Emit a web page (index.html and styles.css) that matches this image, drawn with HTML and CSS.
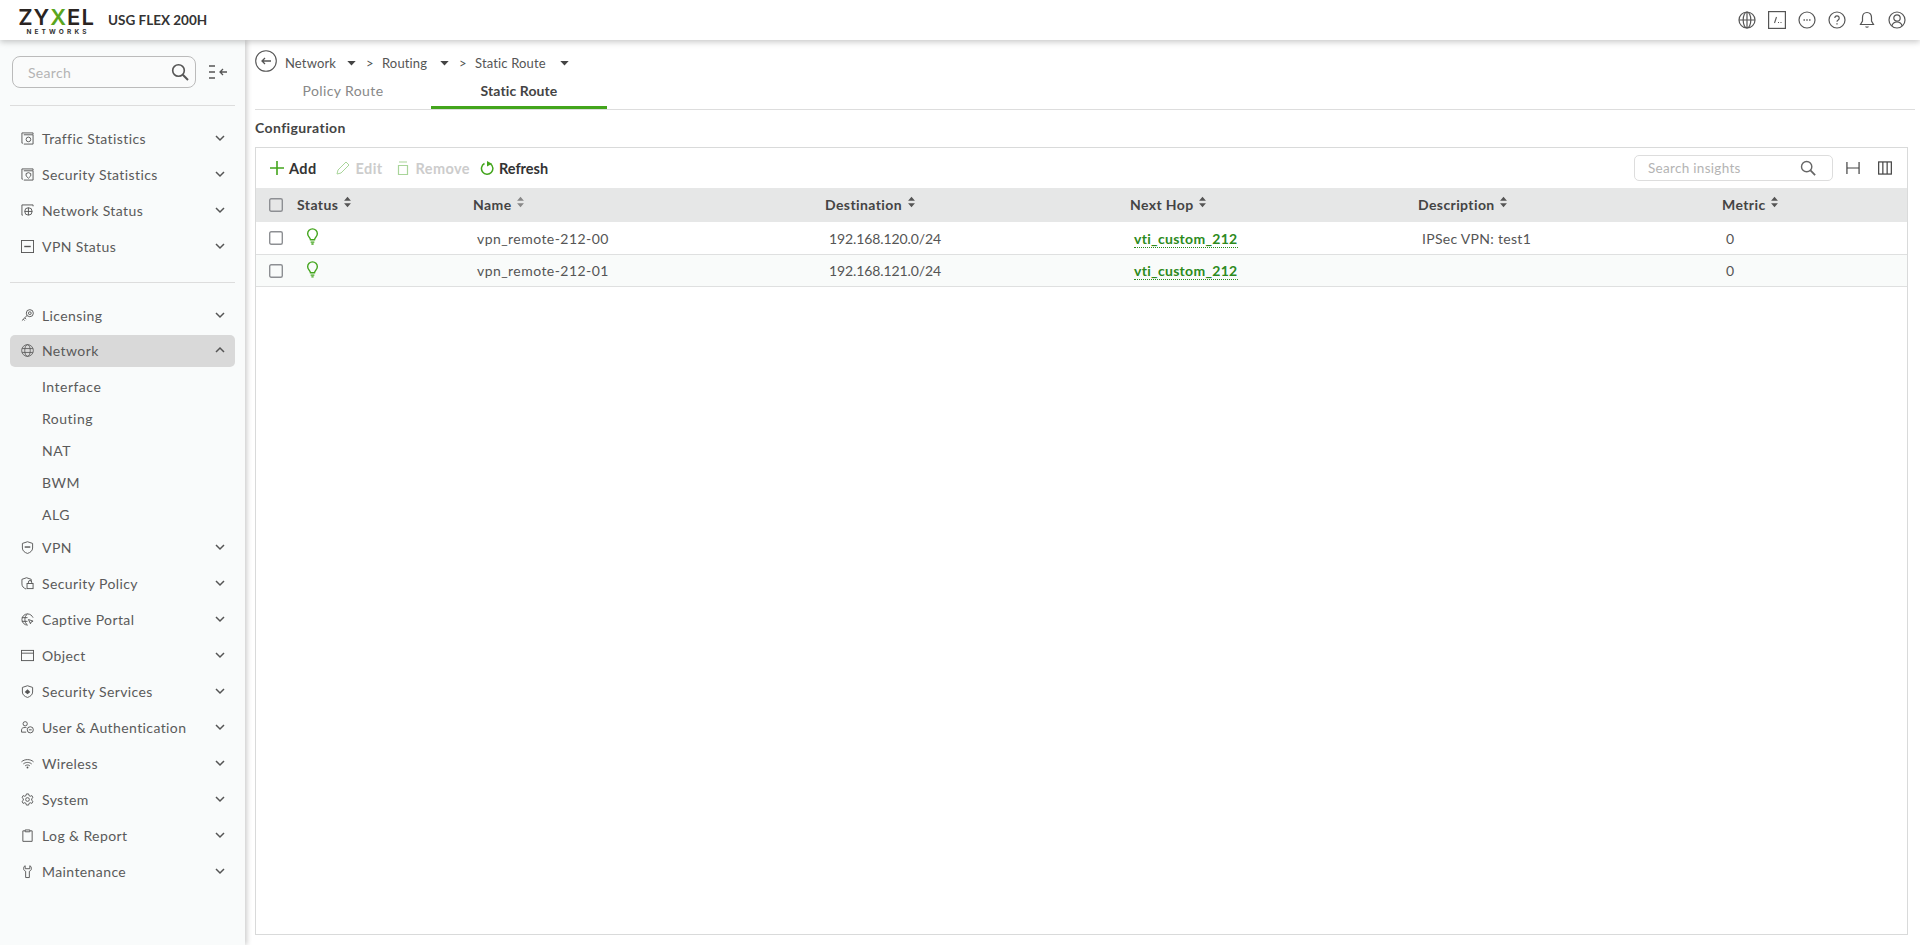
FILE: index.html
```html
<!DOCTYPE html>
<html lang="en">
<head>
<meta charset="utf-8">
<title>USG FLEX 200H</title>
<link rel="stylesheet" href="styles.css">
</head>
<body>
<svg class="defs" width="0" height="0" aria-hidden="true">
  <symbol id="chev-d" viewBox="0 0 12 12"><path d="M2 4l4 4 4-4" fill="none" stroke="currentColor" stroke-width="1.5"/></symbol>
  <symbol id="chev-u" viewBox="0 0 12 12"><path d="M2 8l4-4 4 4" fill="none" stroke="currentColor" stroke-width="1.5"/></symbol>
  <symbol id="sort" viewBox="0 0 10 14"><path d="M5 1l4 4.600H1zM5 13L1 8.400h8z" fill="currentColor"/></symbol>
  <symbol id="caret" viewBox="0 0 10 6"><path d="M0 0h10L5 5.500z" fill="currentColor"/></symbol>
  <symbol id="bulb" viewBox="0 0 14 18"><path d="M4.800 12.500C4.500 10 1.800 9 1.800 6a5.200 5.200 0 0 1 10.400 0c0 3-2.700 4-3 6.500zM5 15h4M5.800 17h2.400" fill="none" stroke="currentColor" stroke-width="1.500"/></symbol>
  <symbol id="box" viewBox="0 0 14 14"><rect x=".7" y=".7" width="12.600" height="12.600" rx="1.500" fill="none" stroke="currentColor" stroke-width="1.400"/></symbol>
  <symbol id="globe" viewBox="0 0 16 16"><g fill="none" stroke="currentColor" stroke-width="1"><circle cx="8" cy="8" r="7.200"/><ellipse cx="8" cy="8" rx="3.400" ry="7.200"/><path d="M1.400 5.600h13.200M1.400 10.400h13.200"/></g></symbol>
  <symbol id="mag" viewBox="0 0 18 18"><circle cx="7.500" cy="7.500" r="5.800" fill="none" stroke="currentColor" stroke-width="1.600"/><path d="M11.800 11.800L17 17" stroke="currentColor" stroke-width="2" fill="none"/></symbol>
</svg>

<header class="topbar">
  <div class="brand">
    <div class="logo"><span class="logo-main">ZY<b>X</b>EL</span><span class="logo-sub">NETWORKS</span></div>
    <span class="model">USG FLEX 200H</span>
  </div>
  <div class="top-icons">
    <svg class="ti" viewBox="0 0 18 18"><g fill="none" stroke="currentColor" stroke-width="1.200"><circle cx="9" cy="9" r="8"/><ellipse cx="9" cy="9" rx="3.800" ry="8"/><path d="M1 9h16M9 1v16"/></g></svg>
    <svg class="ti" viewBox="0 0 18 18"><rect x=".6" y=".6" width="16.800" height="16.800" fill="none" stroke="currentColor" stroke-width="1.200"/><path d="M6.500 12L8.500 6" stroke="currentColor" stroke-width="1.100"/><path d="M10 11.500h1M12.500 11.500h1" stroke="currentColor" stroke-width="1.100"/></svg>
    <svg class="ti" viewBox="0 0 18 18"><circle cx="9" cy="9" r="8" fill="none" stroke="currentColor" stroke-width="1.200"/><path d="M5.500 9h1.400M8.300 9h1.400M11.100 9h1.400" stroke="currentColor" stroke-width="1.400"/></svg>
    <svg class="ti" viewBox="0 0 18 18"><circle cx="9" cy="9" r="8" fill="none" stroke="currentColor" stroke-width="1.200"/><path d="M6.800 7a2.200 2.200 0 1 1 3.400 1.900c-.8.500-1.200.9-1.200 1.800" fill="none" stroke="currentColor" stroke-width="1.200"/><path d="M9 12.200v1.300" stroke="currentColor" stroke-width="1.300"/></svg>
    <svg class="ti" viewBox="0 0 18 18"><path d="M9 1.500c-3 0-4.500 2.200-4.500 5v3.500L2.500 13.500h13L13.500 10V6.500c0-2.800-1.500-5-4.500-5z" fill="none" stroke="currentColor" stroke-width="1.200"/><path d="M7 15.500a2.200 2.200 0 0 0 4 0z" fill="currentColor"/></svg>
    <svg class="ti" viewBox="0 0 18 18"><g fill="none" stroke="currentColor" stroke-width="1.200"><circle cx="9" cy="9" r="8"/><circle cx="9" cy="7" r="3.200"/><path d="M3.800 15c.8-2.800 2.800-4 5.200-4s4.400 1.200 5.200 4"/></g></svg>
  </div>
</header>

<div class="shell">
  <aside class="sidebar">
    <div class="side-search">
      <div class="search-box"><span class="ph">Search</span><svg class="mag"><use href="#mag"/></svg></div>
      <svg class="collapse" viewBox="0 0 22 16"><path d="M1 2h6M1 8h6M1 14h6" stroke="currentColor" stroke-width="1.300"/><path d="M19 8h-7M15 5l-3 3 3 3" fill="none" stroke="currentColor" stroke-width="1.300"/></svg>
    </div>
    <nav class="nav nav-first">
      <div class="item"><svg class="ic" viewBox="0 0 14 14"><g fill="none" stroke="currentColor"><path d="M2 12H1V1h12v1.500"/><path d="M3 3h10v10H3"/><circle cx="8" cy="8" r="2.500"/></g></svg><span>Traffic Statistics</span><svg class="ch"><use href="#chev-d"/></svg></div>
      <div class="item"><svg class="ic" viewBox="0 0 14 14"><g fill="none" stroke="currentColor"><path d="M2 12H1V1h12v1.500"/><path d="M3 3h10v10H3"/><path d="M8 5l2.500 1v2.500L8 11 5.500 8.500V6z"/></g></svg><span>Security Statistics</span><svg class="ch"><use href="#chev-d"/></svg></div>
      <div class="item"><svg class="ic" viewBox="0 0 14 14"><g fill="none" stroke="currentColor"><path d="M2 12H1V1h12v1.500"/><circle cx="8" cy="8" r="4"/><path d="M4 8h8M8 4v8"/></g></svg><span>Network Status</span><svg class="ch"><use href="#chev-d"/></svg></div>
      <div class="item"><svg class="ic" viewBox="0 0 14 14"><rect x=".5" y=".5" width="13" height="13" fill="none" stroke="currentColor"/><path d="M3.500 7h7" stroke="currentColor" stroke-width="1.500"/></svg><span>VPN Status</span><svg class="ch"><use href="#chev-d"/></svg></div>
    </nav>
    <nav class="nav">
      <div class="item"><svg class="ic" viewBox="0 0 14 14"><g fill="none" stroke="currentColor"><circle cx="9.500" cy="4.500" r="3.800"/><circle cx="9.500" cy="4.500" r="1.500"/><path d="M6.500 7L1 12.500M2.500 11l1.500 1.500M4 9.500L5.500 11"/></g></svg><span>Licensing</span><svg class="ch"><use href="#chev-d"/></svg></div>
      <div class="item active"><svg class="ic"><use href="#globe"/></svg><span>Network</span><svg class="ch"><use href="#chev-u"/></svg></div>
      <div class="sub">Interface</div>
      <div class="sub">Routing</div>
      <div class="sub">NAT</div>
      <div class="sub">BWM</div>
      <div class="sub">ALG</div>
      <div class="item"><svg class="ic" viewBox="0 0 14 14"><path d="M7 .8l5.500 1.800v5c0 3-2.500 4.800-5.500 5.800-3-1-5.500-2.800-5.500-5.800v-5z" fill="none" stroke="currentColor"/><path d="M4 6.500h6" stroke="currentColor" stroke-width="1.500"/></svg><span>VPN</span><svg class="ch"><use href="#chev-d"/></svg></div>
      <div class="item"><svg class="ic" viewBox="0 0 14 14"><path d="M6 .8L11 2.500V5M6 .8L1 2.500v5c0 2.800 1.800 4.300 4.500 5.500" fill="none" stroke="currentColor"/><rect x="6.500" y="7" width="6.500" height="5.500" fill="none" stroke="currentColor"/><path d="M8 7V5.500a1.700 1.700 0 0 1 3.500 0V7" fill="none" stroke="currentColor"/></svg><span>Security Policy</span><svg class="ch"><use href="#chev-d"/></svg></div>
      <div class="item"><svg class="ic" viewBox="0 0 14 14"><g fill="none" stroke="currentColor"><path d="M7 1a6 6 0 1 0 0 12"/><path d="M7 1c-2 1.500-2.800 3.500-2.800 6S5 11.500 7 13M1 5h6M1 9h6M7 1c3 0 5 2 6 4"/><path d="M8 7l5 1.800-2 .8-.8 2z"/></g></svg><span>Captive Portal</span><svg class="ch"><use href="#chev-d"/></svg></div>
      <div class="item"><svg class="ic" viewBox="0 0 14 14"><rect x=".5" y="1.500" width="13" height="11" fill="none" stroke="currentColor"/><path d="M.5 4.500h13" stroke="currentColor"/></svg><span>Object</span><svg class="ch"><use href="#chev-d"/></svg></div>
      <div class="item"><svg class="ic" viewBox="0 0 14 14"><path d="M7 .8l5.500 1.800v5c0 3-2.500 4.800-5.500 5.800-3-1-5.500-2.800-5.500-5.800v-5z" fill="none" stroke="currentColor"/><path d="M7 4.500l3 3-3 2.500-3-2.500z" fill="currentColor"/></svg><span>Security Services</span><svg class="ch"><use href="#chev-d"/></svg></div>
      <div class="item"><svg class="ic" viewBox="0 0 14 14"><g fill="none" stroke="currentColor"><circle cx="4.500" cy="3" r="2.300"/><path d="M.6 12V9.500C.6 7.500 2.500 7 4.500 7c.8 0 1 .1 1.500.3M.6 12h5"/><circle cx="10" cy="9.500" r="3.300"/><path d="M8.500 9.500h3"/></g></svg><span>User &amp; Authentication</span><svg class="ch"><use href="#chev-d"/></svg></div>
      <div class="item"><svg class="ic" viewBox="0 0 14 14"><g fill="none" stroke="currentColor"><path d="M.5 5.200C4 2 10 2 13.500 5.200M2.500 7.500c2.500-2.200 6.500-2.200 9 0M4.500 9.500c1.500-1.200 3.500-1.200 5 0"/></g><circle cx="7" cy="11.300" r="1" fill="currentColor"/></svg><span>Wireless</span><svg class="ch"><use href="#chev-d"/></svg></div>
      <div class="item"><svg class="ic" viewBox="0 0 14 14"><g fill="none" stroke="currentColor"><path d="M5.800 1h2.400l.4 1.800 1.400.7 1.700-.7 1.200 2.100-1.400 1.200v1.800l1.400 1.200-1.200 2.100-1.700-.7-1.400.7L8.200 13H5.800l-.4-1.800-1.400-.7-1.700.7L1.100 9.100l1.400-1.200V6.100L1.100 4.900l1.200-2.100 1.700.7 1.400-.7z"/><circle cx="7" cy="7" r="2"/></g></svg><span>System</span><svg class="ch"><use href="#chev-d"/></svg></div>
      <div class="item"><svg class="ic" viewBox="0 0 14 14"><path d="M4.500 2H2v11.300h10V2H9.500M4.500 1h5v2h-5z" fill="none" stroke="currentColor"/></svg><span>Log &amp; Report</span><svg class="ch"><use href="#chev-d"/></svg></div>
      <div class="item"><svg class="ic" viewBox="0 0 14 14"><path d="M4.500.8C2.800 1.500 2.500 3.500 3 5c.4 1 1.300 1.500 2 1.800V13.500h4V6.800c.7-.3 1.600-.8 2-1.800.5-1.500.2-3.500-1.500-4.200V4H4.500z" fill="none" stroke="currentColor"/></svg><span>Maintenance</span><svg class="ch"><use href="#chev-d"/></svg></div>
    </nav>
  </aside>

  <main class="main">
    <div class="crumbs">
      <svg class="back" viewBox="0 0 22 22"><circle cx="11" cy="11" r="10.300" fill="none" stroke="currentColor" stroke-width="1.100"/><path d="M16 11H7M10 8l-3 3 3 3" fill="none" stroke="currentColor" stroke-width="1.300"/></svg>
      <span class="c c1">Network</span><svg class="caret"><use href="#caret"/></svg>
      <span class="gt">&gt;</span><span class="c c2">Routing</span><svg class="caret"><use href="#caret"/></svg>
      <span class="gt">&gt;</span><span class="c c3">Static Route</span><svg class="caret"><use href="#caret"/></svg>
    </div>
    <div class="tabs">
      <div class="tab">Policy Route</div>
      <div class="tab on">Static Route</div>
    </div>
    <h2 class="cfg">Configuration</h2>
    <section class="card">
      <div class="toolbar">
        <div class="tools">
          <span class="tool add"><svg viewBox="0 0 14 14"><path d="M7 0v14M0 7h14" stroke="currentColor" stroke-width="1.600"/></svg><b>Add</b></span>
          <span class="tool off edit"><svg viewBox="0 0 14 14"><path d="M1 13l1-4L10 1l3 3-8 8z" fill="none" stroke="currentColor"/></svg><b>Edit</b></span>
          <span class="tool off rem"><svg viewBox="0 0 14 14"><path d="M2.500 4.500h9v9h-9zM3 1h8" fill="none" stroke="currentColor" stroke-width="1.200"/></svg><b>Remove</b></span>
          <span class="tool refresh"><svg viewBox="0 0 14 14"><path d="M4.500 2.500a5.700 5.700 0 1 0 6 .4" fill="none" stroke="currentColor" stroke-width="1.500"/><path d="M7 0l5 2.800L7 5.500z" fill="currentColor"/></svg><b>Refresh</b></span>
        </div>
        <div class="tools-right">
          <div class="insight"><span class="ph">Search insights</span><svg class="mag2"><use href="#mag"/></svg></div>
          <svg class="rt" viewBox="0 0 15 15"><path d="M1 1v13M14 1v13M1 7.500h13" stroke="currentColor" stroke-width="1.300"/></svg>
          <svg class="rt" viewBox="0 0 15 15"><rect x=".7" y="1" width="13.600" height="13" fill="none" stroke="currentColor" stroke-width="1.300"/><path d="M5.200 1v13M9.800 1v13" stroke="currentColor" stroke-width="1.300"/></svg>
        </div>
      </div>
      <table class="grid">
        <colgroup><col class="k0"><col class="k1"><col class="k2"><col class="k3"><col class="k4"><col class="k5"><col></colgroup>
        <thead>
          <tr>
            <th class="chk"><svg class="cb"><use href="#box"/></svg></th>
            <th>Status <svg class="so"><use href="#sort"/></svg></th>
            <th>Name <svg class="so lt"><use href="#sort"/></svg></th>
            <th>Destination <svg class="so"><use href="#sort"/></svg></th>
            <th>Next Hop <svg class="so"><use href="#sort"/></svg></th>
            <th>Description <svg class="so"><use href="#sort"/></svg></th>
            <th>Metric <svg class="so"><use href="#sort"/></svg></th>
          </tr>
        </thead>
        <tbody>
          <tr>
            <td class="chk"><svg class="cb"><use href="#box"/></svg></td>
            <td class="st"><svg class="bulb"><use href="#bulb"/></svg></td>
            <td>vpn_remote-212-00</td>
            <td class="num">192.168.120.0/24</td>
            <td><a class="lnk">vti_custom_212</a></td>
            <td class="desc">IPSec VPN: test1</td>
            <td>0</td>
          </tr>
          <tr class="alt">
            <td class="chk"><svg class="cb"><use href="#box"/></svg></td>
            <td class="st"><svg class="bulb"><use href="#bulb"/></svg></td>
            <td>vpn_remote-212-01</td>
            <td class="num">192.168.121.0/24</td>
            <td><a class="lnk">vti_custom_212</a></td>
            <td></td>
            <td>0</td>
          </tr>
        </tbody>
      </table>
    </section>
  </main>
</div>
</body>
</html>
```
FILE: styles.css
```css
* { box-sizing: border-box; }
html, body { margin: 0; height: 100%; overflow: hidden; }
body { font-family: "Lato", "Open Sans", sans-serif; font-size: 14px; color: #555; background: #fff; display: flex; flex-direction: column; height: 945px; }
.defs { position: absolute; }
.topbar { height: 40px; flex: none; display: flex; align-items: center; justify-content: space-between; background: #fff; box-shadow: 0 2px 6px rgba(0,0,0,.22); position: relative; z-index: 3; padding: 0 14px 0 20px; }
.brand { display: flex; align-items: center; }
.logo { display: flex; flex-direction: column; align-items: center; width: 73px; margin-top: 3px; }
.logo-main { font-family: "Inter", sans-serif; font-size: 22px; font-weight: 600; line-height: 19px; letter-spacing: 1px; color: #2a2422; }
.logo-main b { color: #5aa51e; font-weight: 600; }
.logo-sub { font-family: "Inter", sans-serif; font-size: 6.500px; font-weight: 700; letter-spacing: 3.150px; line-height: 8px; color: #333; margin-right: -3px; margin-top: 1px; }
.model { font-family: "Lato", sans-serif; font-weight: 700; font-size: 13.500px; letter-spacing: 0; color: #333; margin-left: 15px; }
.top-icons { display: flex; gap: 12px; color: #555; }
.ti { width: 18px; height: 18px; }

.shell { flex: 1; display: flex; min-height: 0; }
.sidebar { width: 245px; flex: none; background: #f9fbfb; box-shadow: 2px 0 5px rgba(0,0,0,.2); position: relative; z-index: 2; padding: 16px 10px 0; }
.side-search { display: flex; align-items: center; gap: 12px; padding: 0 2px; height: 32px; }
.search-box { width: 184px; height: 32px; border: 1px solid #bbb; border-radius: 8px; display: flex; align-items: center; justify-content: space-between; padding: 0 5px 0 15px; background: #fafbfb; }
.ph { color: #b4b4b4; font-size: 14px; letter-spacing: .3px; }
.mag { width: 18px; height: 18px; color: #555; margin-right: 1px; }
.collapse { width: 22px; height: 16px; color: #555; }
.nav-first { margin-top: 17px; padding: 15px 0 17px; border-top: 1px solid #ddd; border-bottom: 1px solid #ddd; }
.nav { display: flex; flex-direction: column; }
.nav:not(.nav-first) { padding-top: 15px; }
.item { height: 36px; display: flex; align-items: center; padding: 0 9px 0 11px; border-radius: 5px; font-size: 14px; letter-spacing: .4px; color: #5a5a5a; }
.item.active { height: 32px; margin: 1px 0 3px; background: #d9d9d9; }
.item span { margin-left: 8px; flex: 1; margin-top: -2px; }
.ic { width: 13px; height: 13px; flex: none; color: #555; overflow: visible; margin-top: -2px; }
.ch { width: 12px; height: 12px; flex: none; color: #555; margin-top: -3px; }
.sub { height: 32px; display: flex; align-items: center; padding-left: 32px; font-size: 14px; letter-spacing: .5px; color: #5a5a5a; }

.main { flex: 1; min-width: 0; padding: 10px 12px 10px 10px; display: flex; flex-direction: column; }
.crumbs { display: flex; align-items: center; height: 22px; font-size: 13px; letter-spacing: .15px; color: #555; }
.crumbs span, .crumbs .caret { position: relative; top: 2px; }
.back { width: 22px; height: 22px; color: #555; flex: none; margin-right: 8px; }
.caret { width: 9px; height: 5px; color: #444; }
.c1 { width: 62px; }
.c2 { width: 58px; }
.c3 { width: 85px; }
.gt { margin: 0 9px 0 10px; width: 7px; }
.tabs { display: flex; height: 32px; margin-right: -7px; border-bottom: 1px solid #ddd; margin-top: 6px; }
.tab { width: 176px; font-size: 14px; letter-spacing: .4px; color: #888; text-align: center; line-height: 25px; height: 32px; }
.tab.on { color: #444; font-weight: 700; letter-spacing: .1px; border-bottom: 3px solid #43a51c; height: 31px; }
.cfg { margin: 9px 0 10px; font-size: 14px; line-height: 18px; font-weight: 700; letter-spacing: .4px; color: #444; }
.card { flex: 1; border: 1px solid #d9dada; display: flex; flex-direction: column; min-height: 0; }
.toolbar { height: 40px; flex: none; display: flex; align-items: center; justify-content: space-between; padding: 0 15px 0 14px; }
.tools { display: flex; align-items: center; }
.tool { display: inline-flex; align-items: center; gap: 6px; font-size: 14.500px; letter-spacing: .4px; color: #333; margin-right: 18px; }
.tool b { font-weight: 700; }
.tool svg { width: 14px; height: 14px; color: #43a51c; }
.tool.add { gap: 5px; margin-right: 19px; }
.tool.off { color: #ccc; }
.tool.off svg { color: #a9d59a; }
.tool.edit { margin-right: 13px; }
.tool.rem { margin-right: 10px; }
.tool.refresh { letter-spacing: 0; gap: 5px; }
.tools-right { display: flex; align-items: center; }
.insight { width: 199px; height: 26px; border: 1px solid #ddd; border-radius: 5px; display: flex; align-items: center; justify-content: space-between; padding: 0 16px 0 13px; margin-right: 13px; }
.insight .ph { font-size: 13.500px; }
.mag2 { width: 16px; height: 16px; color: #666; }
.rt { width: 14px; height: 14px; color: #444; margin-right: 18px; }
.rt:last-child { margin-right: 0; }
.grid { width: 100%; border-collapse: collapse; table-layout: fixed; }
.k0 { width: 37px; }
.k1 { width: 176px; }
.k2 { width: 352px; }
.k3 { width: 305px; }
.k4 { width: 288px; }
.k5 { width: 304px; }
th { height: 34px; background: #e6e7e7; text-align: left; padding: 0 0 2px 4px; font-size: 14px; font-weight: 700; letter-spacing: .4px; color: #444; }
td { height: 32px; padding: 1px 0 0 8px; font-size: 14px; letter-spacing: .45px; color: #555; border-bottom: 1px solid #dfe0e0; }
td.num { letter-spacing: -.1px; }
td.desc { letter-spacing: .3px; }
tr.alt td { background: #f9fbfa; }
th.chk, td.chk { padding: 0 0 0 13px; }
td.chk { padding-top: 1px; }
.cb { width: 14px; height: 14px; color: #8d8f93; display: block; }
.so { width: 9px; height: 12px; color: #555; vertical-align: 2px; margin-left: 1px; }
.so.lt { color: #888; }
.st { padding-left: 13px; }
.bulb { width: 13px; height: 17px; color: #43a51c; display: block; margin-top: -3px; }
.lnk { color: #2c8a1c; font-weight: 700; border-bottom: 1px dotted #2c8a1c; letter-spacing: .3px; }
```
